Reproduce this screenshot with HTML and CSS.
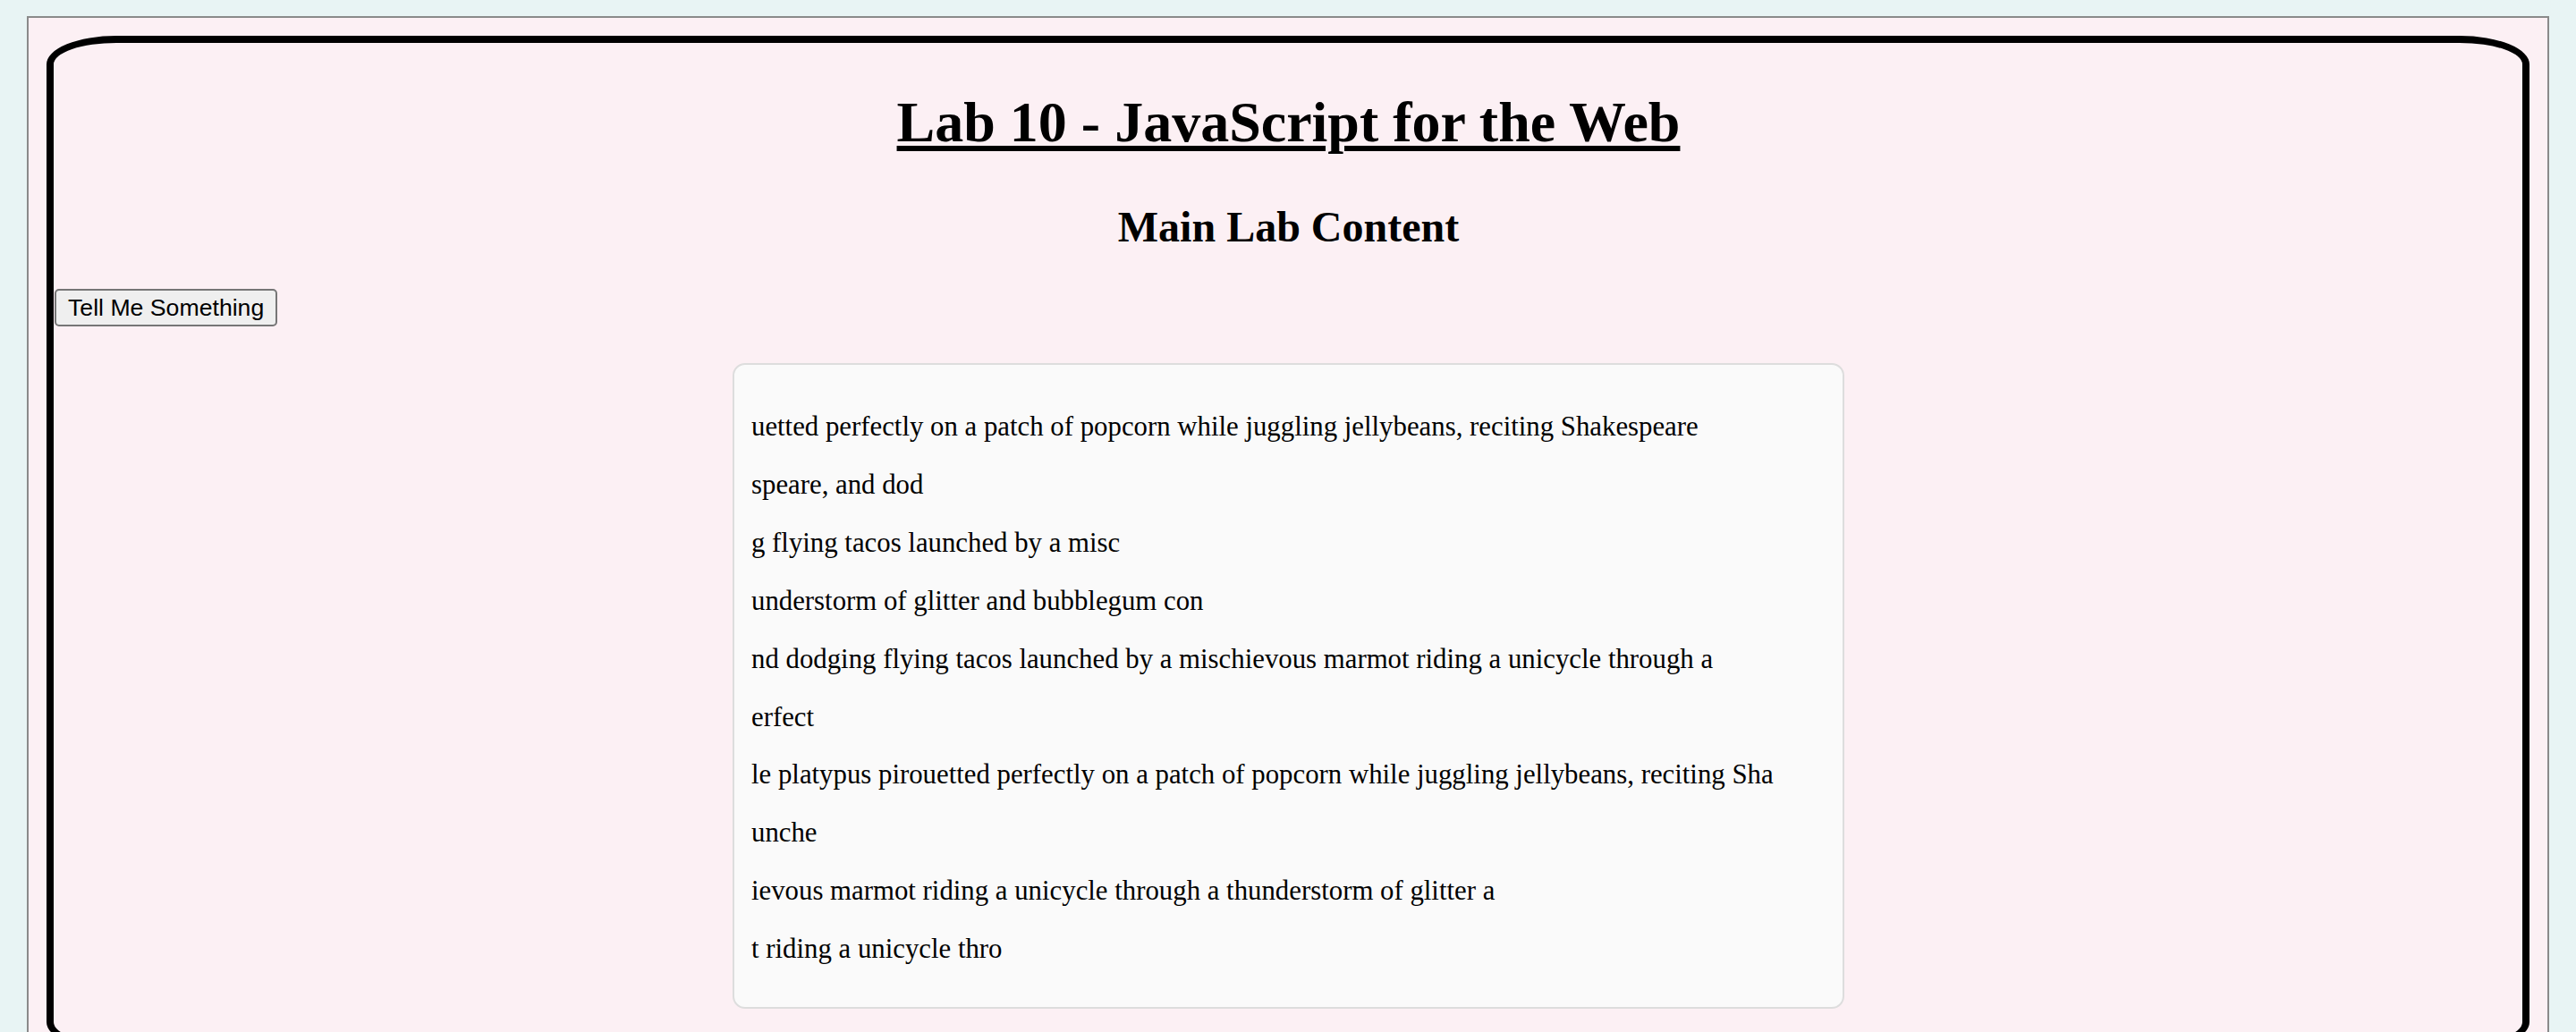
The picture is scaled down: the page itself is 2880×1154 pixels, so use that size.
FILE: index.html
```html
<!DOCTYPE html>
<html lang="en">
<head>
<meta charset="utf-8">
<title>Lab 10 - JavaScript for the Web</title>
<link rel="stylesheet" href="styles.css">
</head>
<body>
<div class="page">
  <div class="frame">
    <h1 class="title">Lab 10 - JavaScript for the Web</h1>
    <h2 class="subtitle">Main Lab Content</h2>
    <button class="tell-btn" type="button">Tell Me Something</button>
    <div class="output">
      <p class="line">uetted perfectly on a patch of popcorn while juggling jellybeans, reciting Shakespeare</p>
      <p class="line">speare, and dod</p>
      <p class="line">g flying tacos launched by a misc</p>
      <p class="line">understorm of glitter and bubblegum con</p>
      <p class="line">nd dodging flying tacos launched by a mischievous marmot riding a unicycle through a</p>
      <p class="line">erfect</p>
      <p class="line">le platypus pirouetted perfectly on a patch of popcorn while juggling jellybeans, reciting Sha</p>
      <p class="line">unche</p>
      <p class="line">ievous marmot riding a unicycle through a thunderstorm of glitter a</p>
      <p class="line">t riding a unicycle thro</p>
    </div>
  </div>
</div>
</body>
</html>
```
FILE: styles.css
```css
html, body {
  margin: 0;
  padding: 0;
}
body {
  background: #e8f4f4;
  padding: 18px 30px 0 30px;
  font-family: "Liberation Serif", "Times New Roman", serif;
  color: #000;
}
.page {
  background: #fcf0f4;
  border: 2px solid #8a8a8a;
  padding: 20px;
}
.frame {
  border: 8px solid #000;
  border-radius: 78px / 32px;
  padding: 0 0 0 1px;
}
.title {
  margin: 52px 0 0 0;
  font-size: 64px;
  line-height: 74px;
  font-weight: bold;
  text-align: center;
  text-decoration: underline;
  text-decoration-thickness: 6px;
  text-underline-offset: 5px;
}
.subtitle {
  margin: 52px 0 0 0;
  font-size: 48px;
  line-height: 55px;
  font-weight: bold;
  text-align: center;
}
.tell-btn {
  display: block;
  margin: 42px 0 0 0;
  height: 42px;
  padding: 0 13px;
  font-family: "Liberation Sans", Arial, sans-serif;
  font-size: 26.67px;
  color: #000;
  background: #efefef;
  border: 2px solid #767676;
  border-radius: 5px;
}
.output {
  width: 1202px;
  margin: 41px auto 39px auto;
  padding: 37px 18px 32px 19px;
  background: #fafafa;
  border: 2px solid #dddddd;
  border-radius: 14px;
}
.line {
  margin: 0;
  font-size: 30.8px;
  line-height: 64.9px;
}
```
